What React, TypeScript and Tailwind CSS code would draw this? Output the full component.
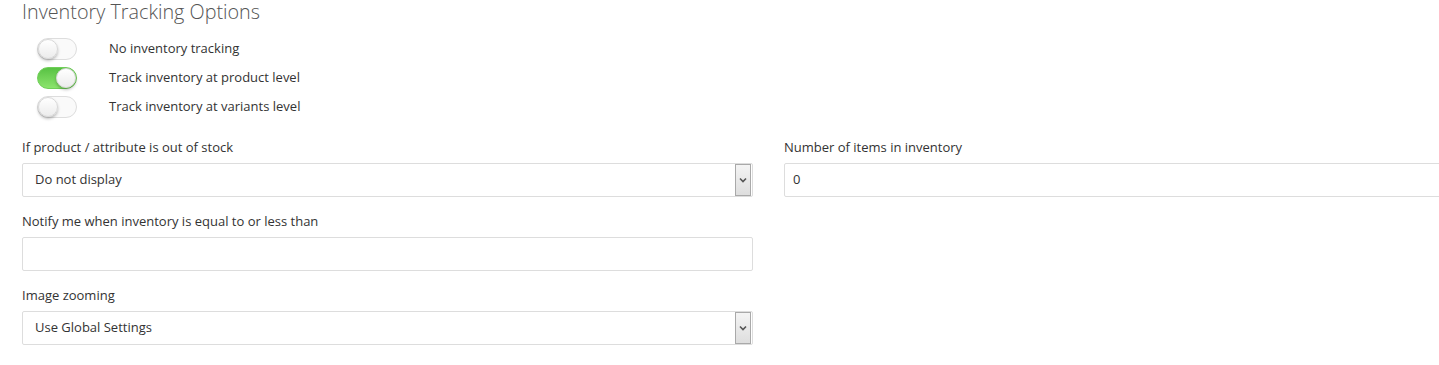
import React, { useState } from 'react';

const font = { fontFamily: '"Open Sans", Lato, sans-serif' };

const Toggle: React.FC<{ on: boolean; onClick: () => void }> = ({ on, onClick }) => (
  <button
    type="button"
    onClick={onClick}
    className={`relative w-[40px] h-[22px] rounded-full border shrink-0 ${
      on
        ? 'bg-gradient-to-b from-[#58c243] to-[#8be46d] border-[#6fcf58]'
        : 'bg-[#fafafa] border-[#dddddd]'
    }`}
  >
    <span
      className={`absolute top-[0px] w-[20px] h-[20px] rounded-full bg-gradient-to-b from-white to-[#ececec] border border-[#d8d8d8] shadow-[0_2px_3px_rgba(0,0,0,0.25)] ${
        on ? 'left-[18px]' : 'left-[0px]'
      }`}
    />
  </button>
);

const SelectBox: React.FC<{ value: string }> = ({ value }) => (
  <div className="flex items-center h-[34px] w-full border border-[#dddddd] rounded-[2px] bg-white">
    <span className="flex-1 pl-[12px] text-[13px] text-[#333]">{value}</span>
    <span className="flex items-center justify-center w-[16px] h-[32px] mr-[1px] border border-[#a9a9a9] bg-gradient-to-b from-[#f4f4f4] to-[#dedede]">
      <svg width="8" height="6" viewBox="0 0 8 6">
        <path d="M1 1.5 L4 4.5 L7 1.5" stroke="#555" strokeWidth="1.6" fill="none" />
      </svg>
    </span>
  </div>
);

const TextBox: React.FC<{ value?: string }> = ({ value }) => (
  <div className="flex items-center h-[34px] w-full border border-[#dddddd] rounded-[2px] bg-white pl-[8px] text-[13px] text-[#333]">
    {value}
  </div>
);

const Field: React.FC<{ label: string; children: React.ReactNode }> = ({ label, children }) => (
  <div className="flex flex-col">
    <label className="text-[13px] text-[#333] leading-[16px] mb-[8px]">{label}</label>
    {children}
  </div>
);

export default function App() {
  const [mode, setMode] = useState(1);
  const options = ['No inventory tracking', 'Track inventory at product level', 'Track inventory at variants level'];

  return (
    <div className="w-[1439px] h-[365px] overflow-hidden bg-white" style={font}>
      <div className="w-[1600px] pl-[22px] pt-[1px]">
        <h2 className="text-[19.8px] font-light text-[#555] leading-[22px]">Inventory Tracking Options</h2>

        <div className="flex flex-col gap-[7px] mt-[15px] pl-[15px]">
          {options.map((o, i) => (
            <div key={o} className="flex items-center">
              <Toggle on={mode === i} onClick={() => setMode(i)} />
              <span className="ml-[32px] text-[13px] text-[#333]">{o}</span>
            </div>
          ))}
        </div>

        <div className="grid grid-cols-[731px_731px] gap-x-[31px] mt-[21px]">
          <div className="flex flex-col gap-[16px]">
            <Field label="If product / attribute is out of stock">
              <SelectBox value="Do not display" />
            </Field>
            <Field label="Notify me when inventory is equal to or less than">
              <TextBox />
            </Field>
            <Field label="Image zooming">
              <SelectBox value="Use Global Settings" />
            </Field>
          </div>
          <div className="flex flex-col">
            <Field label="Number of items in inventory">
              <TextBox value="0" />
            </Field>
          </div>
        </div>
      </div>
    </div>
  );
}
